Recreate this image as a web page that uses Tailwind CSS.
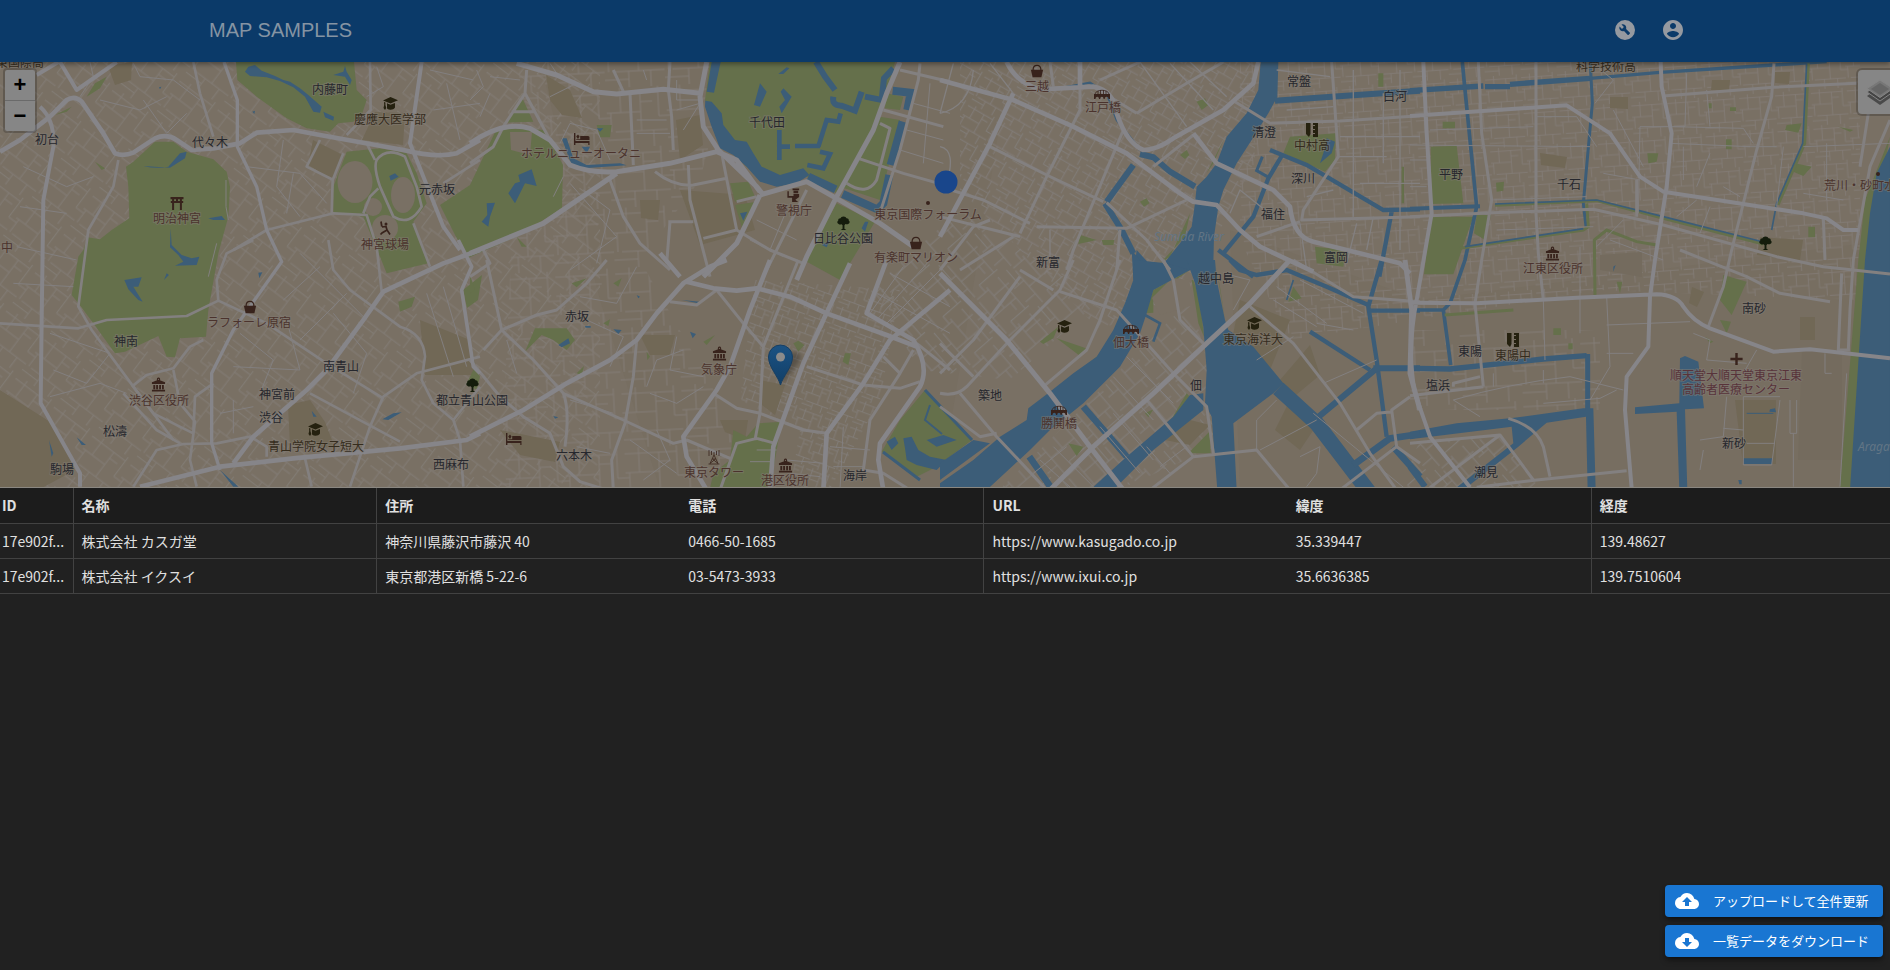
<!DOCTYPE html>
<html lang="ja">
<head>
<meta charset="utf-8">
<meta name="viewport" content="width=device-width, initial-scale=1">
<title>MAP SAMPLES</title>
<script src="https://cdn.jsdelivr.net/npm/@tailwindcss/browser@4"></script>
</head>
<body class="flex min-h-screen flex-col overflow-x-hidden bg-[#212121] font-['Noto_Sans_CJK_JP','Noto_Sans',sans-serif] text-sm text-[#e0e0e0]">

<header class="relative z-20 flex h-[62px] shrink-0 items-center justify-center bg-[#0b3a69] pb-0.5 shadow-[0_2px_5px_rgba(0,0,0,0.4)]">
  <div class="flex w-full max-w-[1488px] items-center justify-between pl-2">
    <h1 class="font-['Liberation_Sans',sans-serif] text-xl text-[#8594a3]">MAP SAMPLES</h1>
    <nav class="-mr-2 flex text-[#9599a0]">
      <button type="button" aria-label="設定" class="flex size-12 items-center justify-center">
        <svg class="size-6" viewBox="0 0 24 24" fill="currentColor" fill-rule="evenodd"><path d="M12 2a10 10 0 1 0 0 20 10 10 0 0 0 0-20Zm4.9 13.5-1.4 1.4c-.2.2-.5.2-.7 0l-3.8-3.8c-1.3.5-2.700.1-3.700-.9-1-1-1.200-2.500-.7-3.700L9 10.900 10.900 9 8.500 6.600c1.300-.5 2.700-.2 3.700.7 1 1 1.300 2.500.9 3.700l3.800 3.800c.2.2.2.5 0 .7Z"/></svg>
      </button>
      <button type="button" aria-label="アカウント" class="flex size-12 items-center justify-center">
        <svg class="size-6" viewBox="0 0 24 24" fill="currentColor"><path d="M12 2C6.480 2 2 6.480 2 12s4.480 10 10 10 10-4.480 10-10S17.520 2 12 2Zm0 3c1.660 0 3 1.340 3 3s-1.340 3-3 3-3-1.340-3-3 1.340-3 3-3Zm0 14.200c-2.500 0-4.710-1.280-6-3.220.03-1.990 4-3.080 6-3.080 1.990 0 5.970 1.090 6 3.080-1.290 1.940-3.500 3.220-6 3.220Z"/></svg>
      </button>
    </nav>
  </div>
</header>

<main class="flex flex-1 flex-col">
<section aria-label="地図" class="relative h-[426px] overflow-hidden border-b border-[#8a8781] bg-[#797064]">
<svg class="absolute inset-0 size-full" viewBox="0 62 1890 425" preserveAspectRatio="xMidYMid slice" role="img" aria-label="東京の地図">
  <defs>
    <g id="streets" fill="none">
      <path d="M0 6H52M0 25H34M8 44H60M14 0V25M34 6V44M52 0V30H60M4 25V44M24 44V60M46 44V60M0 30H4M0 52H24M46 15H34"/>
    </g>
    <pattern id="h0" width="60" height="60" patternUnits="userSpaceOnUse" patternTransform="rotate(-3)"><use href="#streets" class="stroke-[#837c76]" stroke-width="1"/></pattern>
    <pattern id="h1" width="60" height="60" patternUnits="userSpaceOnUse" patternTransform="rotate(37) scale(.8)"><use href="#streets" class="stroke-[#837c76]" stroke-width="1.200"/></pattern>
    <pattern id="h2" width="60" height="60" patternUnits="userSpaceOnUse" patternTransform="rotate(20) scale(.45)"><use href="#streets" class="stroke-[#827d7a]" stroke-width="1.800"/></pattern>
    <pattern id="h3" width="60" height="60" patternUnits="userSpaceOnUse" patternTransform="rotate(30) scale(.55)"><use href="#streets" class="stroke-[#827d7a]" stroke-width="1.600"/></pattern>
    <pattern id="h4" width="60" height="60" patternUnits="userSpaceOnUse" patternTransform="rotate(49) scale(.8)"><use href="#streets" class="stroke-[#827d7a]" stroke-width="1.200"/></pattern>
    <pattern id="h5" width="60" height="60" patternUnits="userSpaceOnUse" patternTransform="rotate(-4) scale(.6)"><use href="#streets" class="stroke-[#837c76]" stroke-width="1.400"/></pattern>
    <linearGradient id="pin" x1="0" y1="0" x2="0" y2="1"><stop offset="0" stop-color="#1b5283"/><stop offset="1" stop-color="#123f67"/></linearGradient>

    <symbol id="hall" viewBox="0 0 16 16"><path d="M8 0a1.800 1.800 0 0 1 1.500 2.800L15 5v2H1V5l5.500-2.200A1.800 1.800 0 0 1 8 0Zm0 1.200a.7.7 0 1 0 0 1.400.7.7 0 0 0 0-1.400ZM2.500 8h2v4.500h-2Zm3 0h2v4.500h-2Zm3.200 0h2v4.500h-2Zm3 0h2v4.500h-2ZM1 13h14v2H1Z"/></symbol>
    <symbol id="tree" viewBox="0 0 16 16"><path d="M8 1c1.800 0 2.800 1 3.200 2 1.600 0 2.600 1 2.400 2.300C15 6 15 8.400 13 9c-1 .6-2.300.4-3 0L9 10.500V14l2 1.500H5L7 14v-3.500L6 9.200C4.500 10 3.500 9.600 2.800 9 1 8.500 1 6.200 2.400 5.300 2.200 4 3.200 3 4.800 3 5.200 2 6.200 1 8 1Z"/></symbol>
    <symbol id="cap" viewBox="0 0 16 16"><path d="M8.500 1 16 4.300 8.500 7.500 1 4.600ZM2 6l1.400.5V9L4.300 12 3 14 1.500 12 2.200 9ZM5 7.200l3.500 1.500L13 7v4.500c-1.500 2.500-5.500 3-8 1Z"/></symbol>
    <symbol id="bag" viewBox="0 0 16 16"><path d="M1 6.500h14L13 15H3Z"/><path d="M3.500 7C3.500 3.500 5 1.500 8 1.500s4.500 2 4.500 5.500" fill="none" stroke="currentColor" stroke-width="1.400"/></symbol>
    <symbol id="bed" viewBox="0 0 18 16"><path d="M1 2h1.400v8H16.500v4h-1.200v-2H2.400v2H1ZM3.200 5.500 5 3.500l1.500 2L5 8Zm4-.5H15c1 0 1.500.8 1.500 1.500V9H3.200V8.300H7.200Z"/></symbol>
    <symbol id="bridge" viewBox="0 0 16 16"><path d="M0 8h16v5h-1.500c0-3-3.800-3-3.800 0H9.600c0-3-3.400-3-3.400 0H5c0-3-3.500-3-3.500 0H0Z"/><path d="M1 8C2 3 14 3 15 8M4 5v3M6.500 4v4M9.500 4v4M12 5v3" fill="none" stroke="currentColor" stroke-width=".8"/></symbol>
    <symbol id="torii" viewBox="0 0 16 16"><path d="M1.500 2h13v2.200h-1.600V6h1.300v2h-1.300v7h-2V8H5.100v7h-2V8H1.800V6h1.300V4.200H1.500ZM5.100 4.200V6h1.900V4.200Zm3.900 0V6h1.900V4.200Z"/></symbol>
    <symbol id="school" viewBox="0 0 16 16"><path d="M2 1h4.500v11L5 15 2 12ZM9 1h5v14H9V12h2v-1H9V8h2V7H9V4h2V3H9Z"/></symbol>
    <symbol id="cross" viewBox="0 0 16 16"><path d="M6.700 1.500h2.600v5.200h5.200v2.600H9.300v5.200H6.700V9.300H1.500V6.700h5.200Z"/></symbol>
    <symbol id="tower" viewBox="0 0 16 16"><path d="M8 3v3M8 6 4 14.500M8 6l4 8.500M6.500 10h3M4 14.500l5.500-4.500M12 14.500 6.500 10M5.500 2v4M10.500 2v4M3 1v6M13 1v6M2.500 15h11" fill="none" stroke="currentColor" stroke-width=".8"/></symbol>
    <symbol id="batter" viewBox="0 0 16 16"><path d="M9 2.500a1.500 1.500 0 1 1 0 3 1.500 1.500 0 0 1 0-3Z"/><path d="M4 1.500l.8 5M5 7l4-.5 1 3.500 3 4.500M10 10l-5 3-1.500 1.500" fill="none" stroke="currentColor" stroke-width="1.700"/></symbol>
    <symbol id="police" viewBox="0 0 16 16"><path d="M7 1h7v2H7Zm1 2.500h5V6H8ZM1.500 4H3v5h5V7h6v3l-4 3 3 2.500H6.500V11H1.500Z"/></symbol>
  </defs>

  <!-- ground -->
  <path class="fill-[#797064]" d="M0 62H1890V489H0Z"/>
  <path class="fill-[#776e61]" d="M540 62H1010L940 489H660L600 300ZM1230 230L1420 300 1890 240V489H1240Z"/>
  <path fill="url(#h1)" d="M0 62H600V489H0Z"/>
  <path fill="url(#h0)" d="M520 62H730L700 180 640 260 770 489H500Z"/>
  <path fill="url(#h2)" d="M755 280L900 290 880 400 830 489H790L800 430 740 400Z"/>
  <path fill="url(#h4)" d="M870 290L960 210 1100 300 1010 380 920 370Z"/>
  <path fill="url(#h3)" d="M960 62H1255V160L1190 290 1100 330 960 190Z"/>
  <path fill="url(#h5)" d="M1240 62H1860V300L1600 290 1290 340 1240 240Z"/>
  <path fill="url(#h4)" d="M1060 430L1190 300 1230 440 1120 489H1000ZM1400 489 1420 440 1500 435 1540 489Z"/>
  <path fill="url(#h0)" d="M1410 330H1600V410H1410Z"/>

  <!-- blocks and campuses -->
  <g class="fill-[#716856]">
    <path d="M108 66L132 62 131 80 115 85ZM375 112L405 113 403 145 362 140ZM313 140L343 155 333 180 308 165ZM288 405L310 400 325 422 335 448 290 445ZM0 390L55 425 75 470 40 489H0ZM420 320L470 340 478 375 425 375ZM546 75L570 90 582 118 562 115 550 100ZM680 190L745 195 755 230 700 245ZM640 200L660 200 658 220 641 218ZM640 335L675 335 670 355 650 355ZM760 380L785 385 775 415 762 405ZM720 420L748 420 745 440 725 432ZM500 430L560 442 555 462 520 455ZM676 120L700 115 703 145 680 160ZM1240 300L1290 320 1270 370 1230 350ZM1310 345L1320 375 1290 400 1280 380ZM1190 420L1210 425 1190 445 1165 440ZM1290 400L1320 420 1300 450 1275 430ZM1712 80L1730 80 1729 91 1711 90ZM1775 72L1790 72 1789 84 1775 83ZM1610 97L1628 97 1628 109 1610 108ZM1540 153L1567 157 1565 168 1541 165ZM1760 237L1803 240 1800 260 1757 255ZM1735 400H1776V464H1743ZM1692 287L1704 292 1697 307 1689 303ZM1800 317H1815V340H1800Z"/>
    <path class="fill-[#746b5e]" d="M1802 350H1842V460H1798ZM1600 255L1642 252 1642 277 1600 270Z"/>
  </g>

  <!-- parks -->
  <g class="fill-[#65704b]">
    <g transform="scale(.33333)">
      <path d="M708 186H1062L1070 270 1100 300 1085 345 1060 365 1015 370 990 395 920 385 860 355 770 290 712 240Z"/>
      <path d="M400 485L465 425 520 425 560 455 640 478 680 515 690 560 685 650 655 760 625 930 618 1010 540 1015 525 1072 500 1070 475 1008 375 1055 345 1060 280 970 235 910 215 885 235 770 250 750 262 712 300 718 335 690 388 655 385 560 378 500Z"/>
      <path d="M1040 455L1140 445 1220 460 1250 520 1280 610 1240 665 1285 790 1160 820 1140 770 1090 650 1000 638 1000 560Z"/>
      <path d="M1195 905L1245 890 1235 920 1200 935ZM320 230L300 265 260 290 285 250ZM165 345L215 320 200 335ZM285 485L315 505 305 510Z"/>
      <path d="M1400 1150L1425 1100 1440 1130 1430 1170Z"/>
    </g>
    <path d="M440 205L470 185 497 128 545 130 563 165 562 208 520 235 468 258 455 235ZM463 290L482 275 478 300 467 308Z"/>
    <g transform="translate(470 50) scale(.33333)">
      <path d="M720 36H1275L1240 160 1200 250 1100 430 1010 380 920 400 850 370 800 320 760 290 730 220 705 150Z"/>
      <path d="M1230 200L1290 210 1230 450 1110 410ZM1250 130L1300 140 1290 180 1245 175Z"/>
      <path d="M1100 460L1215 515 1110 690 1005 632ZM780 400L835 395 855 440 795 455ZM795 465L860 455 820 545ZM155 140L190 215 110 218ZM380 225L425 225 420 262 390 262ZM140 560L170 590 155 590Z"/>
    </g>
    <g transform="translate(470 260) scale(.33333)">
      <path d="M1365 390L1410 440 1505 540 1400 620 1340 650 1235 575 1290 480ZM790 510L830 530 865 490 935 485 900 685 720 685 730 640 780 600ZM165 275L195 205 290 205 315 240 290 270 250 240 215 225ZM970 250L985 242 1003 255 985 275ZM1125 280H1143L1135 315 1118 305ZM305 70L350 55 320 82ZM430 70L455 55 445 80ZM530 275L540 290 532 300ZM320 340L342 318 335 345ZM400 190L420 178 415 198ZM700 245L735 225 710 255ZM0 45L15 90 0 100Z"/>
    </g>
    <g transform="translate(940 50) scale(.33333)">
      <path d="M1050 260L1187 250 1185 330 1155 365 1030 310ZM770 155L795 145 805 165 785 180ZM720 315L740 300 748 315 735 327ZM600 455L620 445 628 460 612 470ZM1125 590L1220 600 1210 650 1130 640ZM420 555L470 570 415 582ZM485 570H523L520 585H490ZM1315 70H1330V110H1315ZM1385 350H1392V460H1385ZM820 340L855 262 800 370ZM750 490L690 620 660 640 735 560Z"/>
    </g>
    <g transform="translate(940 260) scale(.33333)">
      <path d="M750 30L640 90 615 160 640 158 640 110 710 58ZM760 60L780 120 792 230 775 190 755 60ZM823 0L840 80 855 180 835 60ZM505 250L490 290 400 345 470 290ZM350 235L438 265 420 288ZM300 245L355 200 340 235 310 252ZM745 580L808 515 812 580ZM385 550L430 560 410 588ZM0 450L95 540 0 610ZM615 460L640 448 625 472ZM1060 80L1085 115 1045 125ZM750 410L690 485 740 400Z"/>
    </g>
    <g transform="translate(1410 0) scale(.33333)">
      <path d="M62 440L140 437 160 610 65 612ZM62 650H190L130 823H42ZM200 645H243L225 720 192 700ZM1440 410L1365 600 1345 780 1290 1462H1335L1370 780ZM1155 490L1205 500 1180 528 1150 515ZM712 460H745L740 485 715 490ZM948 418H965V448H948ZM258 548L282 545 280 572 260 575ZM98 365H135V385H98ZM1130 375L1175 370 1165 398 1125 390ZM895 310H905V325H895ZM960 322H978V333H960ZM1195 680H1215V712H1195ZM940 825L1010 845 965 945 930 900ZM930 960L963 965 950 1000ZM885 1010L910 1025 900 1030ZM620 845H637L630 880ZM430 985H453V1005H430ZM475 1030H488V1048H475ZM1285 380L1330 390 1320 395Z"/>
    </g>
  </g>
  <g class="fill-[#797064]">
    <ellipse cx="355" cy="182" rx="17.500" ry="21"/><ellipse cx="403" cy="195" rx="12" ry="18"/><circle cx="385" cy="228" r="13"/><circle cx="373" cy="207" r="9"/><path d="M510 132H532L530 155 511 150ZM1152 298L1172 278 1189 280 1194 305 1160 315Z"/>
  </g>

  <!-- water -->
  <g class="fill-[#3c5d78]">
    <g transform="scale(.33333)">
      <path d="M735 215L745 200 765 195 785 212 825 228 850 240 870 245 900 265 925 285 965 320 960 338 940 335 915 290 880 262 840 243 800 232 750 228ZM970 335L1002 350 1000 362 975 352ZM1000 225L1030 215 1035 198 1040 215 1055 240 1050 255 1035 230ZM430 498Q470 508 505 500L540 460 560 455 555 475 510 503ZM1168 528L1185 520 1196 530 1172 542ZM625 655L665 648 675 660 640 660ZM512 685L515 735 545 765 575 775 598 770 590 795 525 797 550 785 535 765 510 742ZM373 840L425 832 415 860 400 860 428 905 415 900 385 868ZM492 840L500 820 507 825ZM775 818L787 817 778 835ZM757 335L765 332 763 342ZM477 262L484 260 480 268ZM147 1320L160 1360 155 1370ZM230 1312L258 1335 245 1335ZM660 1410L715 1460 700 1460ZM935 1232L950 1250 940 1250ZM1147 1258L1180 1240 1205 1237 1165 1260Z"/>
    </g>
    <g transform="translate(470 50) scale(.33333)">
      <path d="M725 36H752L732 128 710 125ZM706 152L725 155 755 190 760 225 795 270 830 275 850 310 875 350 930 375 1000 355 1018 375 980 400 920 410 870 395 830 350 790 315 750 295 725 230 705 170ZM870 100L890 125 870 170 852 165ZM940 115L965 140 935 190 928 170 945 150 932 125ZM925 72L950 52 958 55 940 72ZM145 375L185 358 200 408 165 400 135 460 115 430 135 400 150 395ZM50 460L75 458 60 500 55 530 35 515 52 495ZM275 265L290 265 310 325 350 345 450 340 470 346 340 355 305 345ZM335 290L360 290 350 310ZM810 490L832 485 820 512ZM1185 515L1195 515 1185 545 1175 535ZM1055 585L1080 570 1070 592ZM380 235L400 235 390 245Z"/>
    </g>
    <g transform="translate(470 260) scale(.33333)">
      <path d="M1300 535L1325 530 1345 570 1380 590 1430 600 1400 630 1340 615 1310 600 1305 565ZM1250 545L1275 530 1285 550 1265 570ZM1370 540L1420 525 1460 540 1400 560ZM265 255L295 235 300 250 275 262ZM430 208L455 210 445 222ZM660 215L678 222 668 235ZM250 468L265 472 255 476ZM500 105L510 110 505 115ZM345 198H362V203H347ZM635 120L690 125 685 130Z"/>
    </g>
    <g transform="translate(940 50) scale(.33333)">
      <path d="M962 36H1015L1012 140 985 190 935 270 890 340 850 420 835 470 822 560 820 640 750 660 640 690 585 640 590 600 640 655 680 630 720 580 755 530 765 460 770 410 800 380 830 340 860 260 920 190 955 120Z"/>
      <path d="M575 600L640 680 580 690ZM1160 265L1185 275 1175 310 1140 340 1150 310Z"/>
    </g>
    <g transform="translate(940 260) scale(.33333)">
      <path d="M583 0L680 10 750 30 640 90 620 160 600 220 540 320 430 430 330 510 270 570 140 690H0V670L100 600 180 530 260 480 265 445 330 395 400 340 470 290 520 210 555 130 580 60Z"/>
      <path d="M740 0H825L830 60 855 180 865 210 940 260 1030 370 1000 400 880 490 890 690H832L815 470 795 430 800 330 790 200 765 70Z"/>
      <path d="M0 610L100 540 150 550 0 660ZM790 400V450L640 570 520 690H450L560 590 700 470 750 405Z"/>
    </g>
    <g transform="translate(1410 250) scale(.33333)">
      <path d="M1440 -310L1400 -230 1380 -110 1365 30 1320 720H1440ZM140 520L300 505 520 475H550L557 720H533L528 500 410 518 325 590 160 720H130L310 580 305 530 0 568V545ZM810 325L825 318 865 335 882 475 825 478 832 720H808L800 485 675 492V472L808 460ZM1000 625H1086V642H1000ZM1080 478L1095 475 1098 487 1078 485ZM985 690H995V703H988ZM610 50L617 45 610 65Z"/>
    </g>
  </g>
  <g class="fill-none stroke-[#3c5d78]">
    <g transform="translate(470 50) scale(.33333)" stroke-width="18">
      <path d="M1038 36L1065 80 1095 120M1090 140Q1085 168 1115 167L1155 182 1175 125M1185 140L1235 150 1242 85 1270 55"/>
      <path d="M1112 190L1105 215 1070 210 1045 290M1050 305L1080 312 1060 355 1012 345M975 288H1050M928 240V330M928 290H960" stroke-width="14"/>
      <path d="M1015 380L1097 418M1118 432L1222 478 1240 460 1258 375M1262 345L1298 215M1268 122L1322 128 1312 180" stroke-width="24"/>
    </g>
    <path d="M883 452L920 480M925 390L972 440" stroke-width="3"/>
    <path d="M930 405L925 420 942 434" stroke-width="2"/>
    <g transform="translate(940 50) scale(.33333)" stroke-width="13">
      <path d="M1005 152L1250 135 1440 122" stroke-width="18"/>
      <path d="M990 300L1100 345 1330 480 1440 478M1025 318L985 385 940 500 850 610M1355 485L1318 680M835 600L940 680"/>
      <path d="M967 320L950 362 982 380" stroke-width="9"/>
      <path d="M580 345L500 455M600 312L640 322 690 365 765 410" stroke-width="18"/>
      <path d="M495 460L545 540 580 610" stroke-width="18"/>
      <path d="M340 118L450 98 500 130 530 210 600 300" stroke-width="7"/>
    </g>
    <g transform="translate(940 260) scale(.33333)" stroke-width="13">
      <path d="M870 0L900 30 950 45 1040 30 1160 80 1285 135M1325 0L1285 140 1310 300 1340 530M1290 152H1440M1110 215L1290 330"/>
      <path d="M1060 60L1040 120" stroke-width="5"/>
      <path d="M1300 325H1440M1130 475L1310 325" stroke-width="18"/>
      <path d="M1015 385L1130 490 1290 700" stroke-width="46"/>
      <path d="M1240 615L1350 535 1440 522M1360 560L1440 650M430 440L560 590M268 590L345 700" stroke-width="20"/>
      <path d="M615 165L660 190 640 245" stroke-width="8"/>
    </g>
    <g transform="translate(1410 0) scale(.33333)">
      <path d="M0 272L220 258M225 260H300M300 253L540 235" stroke-width="16"/>
      <path d="M540 235L750 217 1090 195 1250 185" stroke-width="10"/>
      <path d="M157 186L165 270 200 620 165 780 120 910 100 930H20M100 930L122 1095" stroke-width="11"/>
      <path d="M541 190L547 310 520 610 528 680" stroke-width="9"/>
      <path d="M0 626L210 619" stroke-width="12"/>
      <path class="stroke-[#65704b]" d="M255 616L560 602 760 655 1060 732M1195 190L1184 430 1104 615M150 745L520 690 535 680 530 610M104 945L310 930M555 885L553 720 590 690 680 725 740 735" stroke-width="9"/>
      <path d="M255 612L560 600 760 650 1060 726" stroke-width="5"/>
      <path d="M1190 190L1178 430 1100 610 1085 690M165 740L520 686" stroke-width="5"/>
      <path d="M18 1105L120 1107 400 1077 530 1067" stroke-width="16"/>
      <path d="M533 1062V1230" stroke-width="15"/>
      <path d="M1010 1240H1090" stroke-width="3"/>
      <path d="M0 1400L45 1460" stroke-width="18"/>
    </g>
  </g>

  <!-- secondary streets -->
  <g class="fill-none stroke-[#838080]" stroke-linejoin="round">
    <g transform="scale(.33333)" stroke-width="8">
      <path d="M355 480L340 560 265 690 235 920 275 990 400 1160 520 1320M580 186L600 280 640 410M1110 186L1112 330 1040 405M960 420L920 500 1000 540M1030 460L998 540 995 640M700 750L800 690 1000 640 1100 645 1130 740 1145 875M1130 480Q1120 500 1140 560L1180 650Q1230 680 1265 620L1250 560 1215 470Q1160 440 1130 480M1240 670L1290 800M1090 640L1110 590 1135 565M1100 430L1125 480M1330 550L1440 480"/>
      <path d="M0 970L235 985 320 960 560 948 655 902 800 970 980 1090 1150 1195M655 902L650 840 680 760 760 720M395 1160L440 1125 520 1105 570 1040 610 1020M520 1110L540 1210 585 1265 570 1380 590 1460M400 1460L470 1350 550 1332 650 1330 750 1310 800 1340V1370M930 1180L1200 1325M640 1150L585 1190 580 1300 460 1240 400 1160M985 720L1000 810 1050 870 1200 980Q1270 1000 1275 1070L1265 1140 1300 1210 1360 1260 1440 1160M1050 1460L1110 1280 1150 1190 1250 1120 1440 1070M1360 1260L1380 1320 1390 1460M915 1375L935 1460M370 1180L470 1290 540 1330"/>
      <path stroke-width="3" d="M678 540V620L685 660M625 830L650 730M270 186L280 230 240 290M400 190L420 230 520 240 600 300M500 290L420 330 300 300M560 340L500 400 430 300M850 420L830 560 900 650M740 500L900 520 980 610M880 520L860 640M1130 200L1150 260 1100 290M1290 210L1420 240M1300 330L1440 310M1340 250L1380 420M70 500L200 560 280 530M60 620L200 640M50 740L230 780M40 850L220 860M150 1000L330 1060 260 1150 160 1110M150 1190L300 1150 380 1180M700 1100L900 1110 860 960M720 1000L820 1080 780 1180M900 760L1100 960M960 800L850 900M1040 880L900 1020M1000 940L1100 1060 1060 1180M1280 880L1360 1130M1330 860L1400 1100M660 1240L760 1220M700 1300V1200"/>
    </g>
    <g transform="translate(470 50) scale(.33333)" stroke-width="9">
      <path d="M1290 60L1440 95M1350 40L1345 90 1290 300 1220 520M1240 180L1420 230M1165 325L1300 370 1440 410M1130 400Q1190 440 1220 390L1260 235 1230 220M555 365Q610 410 670 405L770 385M655 345L660 450 720 680M755 310L800 540M800 455L860 440M700 565L800 540 900 600 1000 640M595 515H670M600 515L590 640M420 390L460 500 510 580 600 660M170 60L165 130 240 270M165 130L100 230 70 290 0 340M125 185H195M430 60L460 125M600 36L595 120 605 200 610 300M480 130L490 345M1010 420L880 680M0 680L60 640 40 600"/>
      <path stroke-width="3" d="M20 60L40 110 0 150M60 80L150 90M30 200L60 130M640 240L690 160 620 180M500 210H590M500 250H600M270 280L300 220 380 240 420 330M240 140L320 100 380 130M240 40L260 70M1290 300L1420 340M1310 240L1420 270M1330 160L1440 190M1380 100L1360 340M860 510L980 570M840 570L940 620M950 480L900 600M700 150H620V90M530 90L520 60M340 420L420 480 380 640M300 400L440 560 300 660M280 380L250 440"/>
    </g>
    <g transform="translate(470 260) scale(.33333)" stroke-width="9">
      <path d="M50 0L95 210 190 300 280 400 460 480 610 550 650 540 780 595M40 270L95 210 200 165 260 150 350 70 410 0M500 240L490 350 465 490 425 600 430 690M0 300L90 410 160 470 240 520 280 620 330 665 410 690M280 400Q300 450 285 560M730 400L800 445 870 460 1000 510 1070 520M985 0L880 260 870 460 855 540M750 690L800 550 860 535 915 550M1010 320L1180 375 1290 385 1350 365M740 90L820 190 880 260M600 125L680 135 740 90M1240 290L1290 340 1200 480 1180 630 1240 640 1320 690M1330 270L1290 340M1340 250L1440 330"/>
      <path stroke-width="3" d="M1200 160L1300 20M1220 180L1380 0M1250 190L1440 0M1220 100L1440 220M1260 40L1440 140M860 570H920M840 605H910M780 600L770 640M540 400L620 430 700 380M530 380L560 300 640 270M620 230L600 330 700 350M500 20L440 130 330 110M350 180L460 230 420 320M110 240L140 340M300 420L430 460M320 560L420 580M480 540L620 640M560 510L600 600 520 660M950 600L1060 610M960 640L1050 650M1080 560L1200 570M1090 620H1180M1120 500L1110 690"/>
    </g>
    <g transform="translate(940 50) scale(.33333)" stroke-width="9">
      <path d="M150 290L320 375 490 455M420 60V180L320 380 240 550M0 410L130 450 270 520M290 530L560 535 740 450M500 458L620 570 690 660M640 350L760 255M550 240L400 600 380 660M885 155L990 220 1200 213 1440 197M1175 36L1195 320 1090 480 1085 510 1440 500M950 560L1080 515M330 36L340 110M590 190L740 100 850 36M0 500L240 560M60 660L220 560M540 540L530 660M460 110L590 190M480 90L600 36M0 660L100 530 150 510"/>
      <path stroke-width="4" d="M600 36L740 230M750 36L860 140M0 190Q90 170 100 60M330 540V660M150 40L220 130M40 40L0 190M0 290Q50 300 20 400M690 40L820 180M1040 180L1180 170M1240 60V500M1330 130V340M1380 60V600M1200 260H1440M1190 320H1340M1260 400H1440M870 490L900 420 1000 500M1100 440L1180 420M1080 520L1100 660M1250 520L1220 640M1300 500L1280 600M1010 60L1170 80"/>
    </g>
    <g transform="translate(940 260) scale(.33333)" stroke-width="9">
      <path d="M0 400Q50 410 80 380L210 240 360 90 400 0M60 400L170 530 320 690M0 440L120 530 170 520M360 95L530 150 700 340 800 440 820 580M670 0L700 60 720 180 790 250M930 140L1060 250 1200 430 1290 580 1370 690M760 590L950 570 1050 690M620 420L760 590 630 690M1060 0L1240 110 1440 125M1395 0L1415 150 1410 340 1440 450M1200 690L1370 560 1440 610M1370 560L1355 450 1410 410M540 0L480 180 440 270 310 380M240 50L100 240 0 340M1250 510L1310 460 1360 455M240 30L340 90M0 250L100 350"/>
      <path stroke-width="3" d="M1120 460L1400 690M1060 230L950 300M1150 370L1310 300M1130 480L960 570M1080 590L1140 560 1130 640 1100 680M950 570V480L1010 420M880 150L930 60 850 40M1000 120L1130 200M1010 80L1160 190M1080 60L1270 160M1130 190L1240 210M520 460L640 600M480 500L600 640M660 620L740 560M690 640L620 560M300 600L400 690M340 560L460 680M280 640L380 560M560 290L700 430M520 350L640 480"/>
    </g>
    <g transform="translate(1410 0) scale(.33333)" stroke-width="9">
      <path d="M0 650L250 638 550 628 760 675 1100 770 1240 800 1440 822M760 288L1090 262 1340 250M1092 190L1085 290 1040 450 965 750 940 860 895 980M1440 360L1380 500 1330 780 1320 930 1315 1050M1375 340L1350 500M1240 655L1245 780M680 540V650M205 186L215 400 245 600 215 780 195 910 220 1160M378 186V640L385 760 400 900M810 750L1010 830 1110 880 1260 905M1295 820L1285 1050H1320M0 1187L220 1160M0 1330L270 1305 370 1440M60 1462L270 1305M200 1462L380 1440 650 1412M295 1255Q380 1280 400 1340L420 1430M130 1160V1150L210 1130"/>
      <path stroke-width="3" d="M0 435L540 440M60 390L370 380M0 480H60M380 350H500L560 440M830 220L825 380H690L685 640M890 270L900 380M790 380L1000 385 1030 430M820 440V540M780 430L1020 440M560 200L610 240 555 310M610 330L700 500M860 560L900 460M1000 440H1100M1180 440L1440 430M1250 430V600M1180 580L1300 600M1120 440L1100 620M580 520L690 540M0 560H50M250 600L530 590M260 690L550 680M800 650L860 600M900 620L870 700M510 740V1000M590 890L600 1100 540 1200M590 975L840 965M400 900L405 1080M590 1060H670M850 1000L900 1020 890 1080 1010 1090M870 1320L940 1310 950 1190M1110 1200L1085 1395H1000V1190H1110M940 1285L1000 1290M1160 1200V1300H1140V1200M1150 1300L1150 1460M1310 1120L1290 1460M130 1200L210 1250M250 1120V1160M400 1110V1150M130 1200Q300 1150 480 1130L640 1170M400 1210L570 1195 620 1170M1040 1050L1000 1120M1245 1060V1120H1265M1010 1330H1095M880 1350L870 1410M640 660L560 740M600 720L760 780M940 560L990 590"/>
    </g>
  </g>

  <!-- main roads -->
  <g class="fill-none stroke-[#868589]" stroke-linejoin="round">
    <g transform="scale(.33333)" stroke-width="14">
      <path d="M0 455L60 420 150 350 200 300Q225 285 245 305L310 400 345 460Q370 470 400 458L465 415Q500 400 530 420L575 450 640 445 720 430 770 398 880 390 960 405 1210 450Q1310 475 1370 460L1440 420"/>
      <path d="M110 225L175 186M180 186L230 270 350 186M120 320Q165 360 160 440L130 600 125 960 122 1210 240 1420V1460M1265 186L1230 430 1330 680 1380 750" stroke-width="12"/>
      <path d="M672 186L712 300V440L770 560 800 690 845 785 700 990 635 1120V1330L660 1410" stroke-width="10"/>
      <path d="M1440 750L1330 790 1150 875 1090 960 980 1110 920 1170 840 1240 760 1310 700 1390M420 1460L660 1400 880 1375 1200 1345 1400 1320 1440 1300"/>
      <path d="M1375 720L1415 800 1385 870 1420 1100 1440 1120" stroke-width="11"/>
    </g>
    <g transform="translate(470 50) scale(.33333)" stroke-width="15">
      <path d="M140 40L260 75 370 125 440 132 580 118 690 130M710 36L690 140 700 230 745 300 860 410 880 435M0 280Q100 210 180 235L240 270 300 345Q360 370 440 365L600 340 740 305 800 330 870 425M440 370L220 520 0 610M870 435L1010 395 1090 440 1230 520 1330 590M1290 36L1250 130 1210 240 1100 440 1010 620 980 690M870 435L800 580 700 680"/>
    </g>
    <g transform="translate(470 260) scale(.33333)" stroke-width="14">
      <path d="M0 530L160 450 290 370 420 300 500 240 560 160 640 70 720 20 770 0M570 -20L630 50M650 65L730 85 800 92 860 85 960 110 1070 160 1250 225 1340 260M900 0L840 150 780 320 740 390 640 530 650 590 710 690M1140 10L1060 180 1000 310 910 560 900 690M1250 0L1190 160 1330 240Q1380 320 1350 380L1230 550 1225 600 1240 690M1060 690L1070 520 1180 370 1260 240 1440 90"/>
    </g>
    <g transform="translate(940 50) scale(.33333)" stroke-width="14">
      <path d="M0 90L220 150 400 230 560 310 720 430 760 455 830 465 900 540 960 590 1120 665M200 36Q230 100 300 118L460 110Q520 120 530 190Q560 280 610 300Q650 300 700 265L850 180 940 100 955 36M760 250L830 340 1000 420 1050 470Q1060 560 1120 575L1380 640 1410 670M220 130L150 280 0 560M420 36V110"/>
    </g>
    <g transform="translate(940 260) scale(.33333)" stroke-width="15">
      <path d="M0 40L200 240 330 400 450 560 550 690M330 690L460 560 640 400 800 250 930 130 1050 0M1395 0L1415 150 1410 340 1440 450"/>
    </g>
    <g transform="translate(1410 0) scale(.33333)" stroke-width="12">
      <path d="M40 186L50 400 65 640 20 900M752 186L755 260 785 400 770 560 735 780 720 890 715 1040 650 1130 645 1230 665 1465M0 348L470 316 600 400 690 530 760 575 1000 612 1180 640 1250 655 1300 690 1345 690M0 908L200 910 500 893 740 883Q800 885 820 920Q850 965 900 985L1090 1055 1200 1048 1440 1075M20 900Q-10 1050 15 1180L60 1310 180 1462"/>
    </g>
  </g>

  <!-- point symbols -->
  <g class="fill-[#38231c] text-[#38231c]">
    <use href="#torii" x="169" y="195" width="16" height="16"/>
    <use href="#hall" x="151" y="377" width="15" height="16"/>
    <use href="#hall" x="712" y="346" width="15" height="16"/>
    <use href="#hall" x="778" y="458" width="15" height="16"/>
    <use href="#hall" x="1545" y="246" width="15" height="16"/>
    <use href="#bag" x="243" y="300" width="14" height="14"/>
    <use href="#bag" x="909" y="236" width="14" height="14"/>
    <use href="#bag" x="1030" y="64" width="14" height="14"/>
    <use href="#bed" x="573" y="131" width="18" height="16"/>
    <use href="#bed" x="505" y="431" width="18" height="16"/>
    <use href="#bridge" x="1094" y="86" width="16" height="16"/>
    <use href="#bridge" x="1123" y="321" width="16" height="16"/>
    <use href="#bridge" x="1051" y="402" width="16" height="16"/>
    <use href="#cross" x="1729" y="351" width="15" height="16"/>
    <use href="#tower" x="706" y="449" width="16" height="16"/>
    <use href="#batter" x="377" y="220" width="16" height="16"/>
    <use href="#police" x="786" y="187" width="15" height="16"/>
    <circle cx="928" cy="203" r="2"/><circle cx="1878" cy="174" r="2"/>
  </g>
  <g class="fill-[#25210f]">
    <use href="#cap" x="382" y="96" width="16" height="16"/>
    <use href="#cap" x="307" y="422" width="16" height="16"/>
    <use href="#cap" x="1056" y="319" width="16" height="16"/>
    <use href="#cap" x="1246" y="316" width="16" height="16"/>
    <use href="#school" x="1304" y="122" width="16" height="16"/>
    <use href="#school" x="1505" y="332" width="16" height="16"/>
  </g>
  <g class="fill-[#141c0c]">
    <use href="#tree" x="465" y="377" width="15" height="16"/>
    <use href="#tree" x="836" y="215" width="15" height="16"/>
    <use href="#tree" x="1758" y="235" width="15" height="16"/>
  </g>

  <!-- place names -->
  <g class="fill-[#26272d] stroke-[#817b73]/50 font-['Noto_Sans_CJK_JP',sans-serif] text-xs" stroke-width="2" paint-order="stroke" text-anchor="middle">
    <text x="47" y="144">初台</text><text x="210" y="147">代々木</text><text x="330" y="94">内藤町</text>
    <text x="437" y="194">元赤坂</text><text x="767" y="127">千代田</text><text x="126" y="346">神南</text>
    <text x="341" y="371">南青山</text><text x="277" y="399">神宮前</text><text x="271" y="422">渋谷</text>
    <text x="115" y="436">松濤</text><text x="62" y="474">駒場</text><text x="451" y="469">西麻布</text>
    <text x="577" y="321">赤坂</text><text x="574" y="460">六本木</text><text x="855" y="480">海岸</text>
    <text x="990" y="400">築地</text><text x="1048" y="267">新富</text><text x="1299" y="86">常盤</text>
    <text x="1395" y="101">白河</text><text x="1264" y="137">清澄</text><text x="1303" y="183">深川</text>
    <text x="1273" y="219">福住</text><text x="1336" y="262">富岡</text><text x="1216" y="283">越中島</text>
    <text x="1196" y="390">佃</text><text x="1451" y="179">平野</text><text x="1569" y="189">千石</text>
    <text x="1470" y="356">東陽</text><text x="1438" y="390">塩浜</text><text x="1754" y="313">南砂</text>
    <text x="1734" y="448">新砂</text><text x="1486" y="477">潮見</text><text x="472" y="405">都立青山公園</text>
    <text x="843" y="243">日比谷公園</text>
  </g>
  <g class="fill-[#352c1d] stroke-[#817b73]/50 font-['Noto_Sans_CJK_JP',sans-serif] text-xs" stroke-width="2" paint-order="stroke" text-anchor="middle">
    <text x="390" y="124">慶應大医学部</text><text x="316" y="451">青山学院女子短大</text><text x="1312" y="150">中村高</text>
    <text x="1253" y="344">東京海洋大</text><text x="1513" y="360">東陽中</text><text x="1606" y="71">科学技術高</text><text x="20" y="67">東国際高</text>
  </g>
  <g class="fill-[#4b332d] stroke-[#817b73]/50 font-['Noto_Sans_CJK_JP',sans-serif] text-xs" stroke-width="2" paint-order="stroke" text-anchor="middle">
    <text x="177" y="223">明治神宮</text><text x="385" y="249">神宮球場</text><text x="249" y="327">ラフォーレ原宿</text>
    <text x="159" y="405">渋谷区役所</text><text x="7" y="252">中</text><text x="581" y="158">ホテルニューオータニ</text>
    <text x="794" y="215">警視庁</text><text x="928" y="219">東京国際フォーラム</text><text x="916" y="262">有楽町マリオン</text>
    <text x="1037" y="91">三越</text><text x="1103" y="112">江戸橋</text><text x="1131" y="347">佃大橋</text>
    <text x="1059" y="428">勝鬨橋</text><text x="719" y="374">気象庁</text><text x="714" y="477">東京タワー</text>
    <text x="785" y="485">港区役所</text><text x="1553" y="273">江東区役所</text><text x="1824" y="190" text-anchor="start">荒川・砂町水</text>
  </g>
  <g class="fill-[#58333a] stroke-[#817b73]/50 font-['Noto_Sans_CJK_JP',sans-serif] text-xs" stroke-width="2" paint-order="stroke" text-anchor="middle">
    <text x="1736" y="380">順天堂大順天堂東京江東</text><text x="1736" y="394">高齢者医療センター</text>
  </g>
  <g class="fill-[#627585] font-['Noto_Sans',sans-serif] text-xs italic">
    <text x="1154" y="241">Sumida River</text><text x="1858" y="451">Aragawa</text>
  </g>

  <!-- current position and marker -->
  <circle cx="946" cy="182" r="11.500" class="fill-[#19468b]"/>
  <path d="M782 385L799 362Q805 352 792 352L782 366Z" class="fill-black/25 blur-[2px]"/>
  <path d="M780.500 385C778 376 768.500 367 768.500 357A12 12 0 0 1 792.500 357C792.500 367 783 376 780.500 385Z" fill="url(#pin)" class="stroke-[#173f63]"/>
  <circle cx="780.500" cy="357" r="4.500" class="fill-[#8b8b8b]"/>
</svg>

<div class="absolute top-1.5 left-[3px] flex w-[34px] flex-col overflow-hidden rounded border-2 border-black/20 bg-[#868686] bg-clip-padding font-['Liberation_Sans',sans-serif] text-[22px] font-bold text-black">
  <button type="button" aria-label="ズームイン" class="flex h-[31px] items-center justify-center border-b border-[#6a6a6a]">+</button>
  <button type="button" aria-label="ズームアウト" class="flex h-[30px] items-center justify-center">−</button>
</div>
<button type="button" aria-label="レイヤー" class="absolute top-1.5 -right-[14px] flex h-12 w-12 items-center justify-center rounded-md border-2 border-black/20 bg-[#868686] bg-clip-padding">
  <svg class="size-[26px]" viewBox="0 0 26 26"><path d="M0 17 13 8l13 9-13 9Z" fill="#4a4a4a"/><path d="M0 13 13 4l13 9-13 9Z" fill="#444" stroke="#868686"/><path d="M0 9.500 13 1l13 8.500-13 9Z" fill="#777" stroke="#868686"/><path d="M4 10 13 4l9 6-9 6Z" fill="#666"/></svg>
</button>
</section>

<section aria-label="一覧" class="overflow-hidden">
<table class="w-[calc(100%+5px)] table-fixed border-collapse text-left">
  <colgroup><col class="w-[73px]"><col><col><col><col><col><col></colgroup>
  <thead class="bg-[#1c1c1c]">
    <tr class="h-[35px] border-b border-[#424242]">
      <th class="border-r border-[#424242] pl-0.5">ID</th><th class="border-r border-[#424242] pl-2">名称</th><th class="pl-2">住所</th><th class="border-r border-[#424242] pl-2">電話</th><th class="pl-2">URL</th><th class="border-r border-[#424242] pl-2">緯度</th><th class="pl-2">経度</th>
    </tr>
  </thead>
  <tbody>
    <tr class="h-[35px] border-b border-[#424242]">
      <td class="border-r border-[#424242] pl-0.5">17e902f...</td><td class="border-r border-[#424242] pl-2">株式会社 カスガ堂</td><td class="pl-2">神奈川県藤沢市藤沢 40</td><td class="border-r border-[#424242] pl-2">0466-50-1685</td><td class="pl-2">https://www.kasugado.co.jp</td><td class="border-r border-[#424242] pl-2">35.339447</td><td class="pl-2">139.48627</td>
    </tr>
    <tr class="h-[35px] border-b border-[#424242]">
      <td class="border-r border-[#424242] pl-0.5">17e902f...</td><td class="border-r border-[#424242] pl-2">株式会社 イクスイ</td><td class="pl-2">東京都港区新橋 5-22-6</td><td class="border-r border-[#424242] pl-2">03-5473-3933</td><td class="pl-2">https://www.ixui.co.jp</td><td class="border-r border-[#424242] pl-2">35.6636385</td><td class="pl-2">139.7510604</td>
    </tr>
  </tbody>
</table>
</section>

<div class="mt-auto mr-[7px] mb-[13px] flex w-[218px] flex-col gap-2 self-end text-[13px] text-white">
  <button type="button" class="flex h-8 items-center gap-3.5 rounded bg-[#1976d2] pl-2.5 shadow-md shadow-black/40">
    <svg class="size-6" viewBox="0 0 24 24" fill="currentColor"><path d="M19.350 10.040A7.490 7.490 0 0 0 12 4C9.110 4 6.600 5.640 5.350 8.040A5.994 5.994 0 0 0 0 14c0 3.310 2.690 6 6 6h13c2.760 0 5-2.240 5-5 0-2.640-2.050-4.780-4.650-4.960ZM14 13v4h-4v-4H7l5-5 5 5h-3Z"/></svg>
    アップロードして全件更新
  </button>
  <button type="button" class="flex h-8 items-center gap-3.5 rounded bg-[#1976d2] pl-2.5 shadow-md shadow-black/40">
    <svg class="size-6" viewBox="0 0 24 24" fill="currentColor"><path d="M19.350 10.040A7.490 7.490 0 0 0 12 4C9.110 4 6.600 5.640 5.350 8.040A5.994 5.994 0 0 0 0 14c0 3.310 2.690 6 6 6h13c2.760 0 5-2.240 5-5 0-2.640-2.050-4.780-4.650-4.960ZM17 13l-5 5-5-5h3V9h4v4h3Z"/></svg>
    一覧データをダウンロード
  </button>
</div>
</main>
</body>
</html>
